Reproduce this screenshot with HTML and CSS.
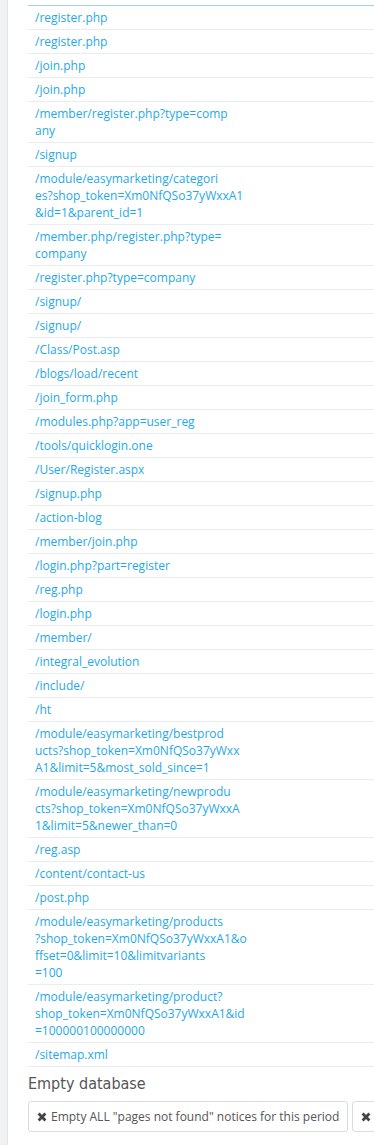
FILE: index.html
```html
<!DOCTYPE html>
<html>
  <head>
    <meta charset="utf-8">
    <title>Pages not found</title>
    <link rel="stylesheet" href="styles.css">
  </head>
  <body>
    <div class="page">
      <div class="side"></div>
      <div class="content">
        <table class="table">
          <tbody>
            <tr><td class="url">/register.php</td><td></td></tr>
            <tr><td class="url">/register.php</td><td></td></tr>
            <tr><td class="url">/join.php</td><td></td></tr>
            <tr><td class="url">/join.php</td><td></td></tr>
            <tr><td class="url">/member/register.php?type=comp<br>any</td><td></td></tr>
            <tr><td class="url">/signup</td><td></td></tr>
            <tr><td class="url">/module/easymarketing/categori<br>es?shop_token=Xm0NfQSo37yWxxA1<br>&amp;id=1&amp;parent_id=1</td><td></td></tr>
            <tr><td class="url">/member.php/register.php?type=<br>company</td><td></td></tr>
            <tr><td class="url">/register.php?type=company</td><td></td></tr>
            <tr><td class="url">/signup/</td><td></td></tr>
            <tr><td class="url">/signup/</td><td></td></tr>
            <tr><td class="url">/Class/Post.asp</td><td></td></tr>
            <tr><td class="url">/blogs/load/recent</td><td></td></tr>
            <tr><td class="url">/join_form.php</td><td></td></tr>
            <tr><td class="url">/modules.php?app=user_reg</td><td></td></tr>
            <tr><td class="url">/tools/quicklogin.one</td><td></td></tr>
            <tr><td class="url">/User/Register.aspx</td><td></td></tr>
            <tr><td class="url">/signup.php</td><td></td></tr>
            <tr><td class="url">/action-blog</td><td></td></tr>
            <tr><td class="url">/member/join.php</td><td></td></tr>
            <tr><td class="url">/login.php?part=register</td><td></td></tr>
            <tr><td class="url">/reg.php</td><td></td></tr>
            <tr><td class="url">/login.php</td><td></td></tr>
            <tr><td class="url">/member/</td><td></td></tr>
            <tr><td class="url">/integral_evolution</td><td></td></tr>
            <tr><td class="url">/include/</td><td></td></tr>
            <tr><td class="url">/ht</td><td></td></tr>
            <tr><td class="url">/module/easymarketing/bestprod<br>ucts?shop_token=Xm0NfQSo37yWxx<br>A1&amp;limit=5&amp;most_sold_since=1</td><td></td></tr>
            <tr><td class="url">/module/easymarketing/newprodu<br>cts?shop_token=Xm0NfQSo37yWxxA<br>1&amp;limit=5&amp;newer_than=0</td><td></td></tr>
            <tr><td class="url">/reg.asp</td><td></td></tr>
            <tr><td class="url">/content/contact-us</td><td></td></tr>
            <tr><td class="url">/post.php</td><td></td></tr>
            <tr><td class="url">/module/easymarketing/products<br>?shop_token=Xm0NfQSo37yWxxA1&amp;o<br>ffset=0&amp;limit=10&amp;limitvariants<br>=100</td><td></td></tr>
            <tr><td class="url">/module/easymarketing/product?<br>shop_token=Xm0NfQSo37yWxxA1&amp;id<br>=100000100000000</td><td></td></tr>
            <tr><td class="url">/sitemap.xml</td><td></td></tr>
          </tbody>
        </table>

        <h4 class="title">Empty database</h4>
        <div class="actions">
          <a href="javascript:;" class="btn">
            <svg class="ico" viewBox="0 0 10 10"><path d="M0.6 2.6 2.6 0.6 5 3 7.4 0.6 9.4 2.6 7 5 9.4 7.4 7.4 9.4 5 7 2.6 9.4 0.6 7.4 3 5z"/></svg>
            Empty ALL "pages not found" notices for this period
          </a>
          <a href="javascript:;" class="btn">
            <svg class="ico" viewBox="0 0 10 10"><path d="M0.6 2.6 2.6 0.6 5 3 7.4 0.6 9.4 2.6 7 5 9.4 7.4 7.4 9.4 5 7 2.6 9.4 0.6 7.4 3 5z"/></svg>
            Empty ALL "pages not found" notices
          </a>
        </div>
      </div>
    </div>
  </body>
</html>
```

FILE: styles.css
```css
*{ margin:0; padding:0; box-sizing: border-box; }
html,body{ overflow-x: hidden; }
body{ width: 374px; height: 1145px; background: #fff;
  font-family: "Open Sans", "Liberation Sans", sans-serif; font-size: 12px; color: #555; }
a{ text-decoration: none; }

.page{ display: flex; min-height: 1145px; }
.side{ flex: 0 0 8px; background: #eff1f2; border-right: 1px solid #e3e6e8; }
.content{ flex: 0 0 auto; padding: 5px 0 0 20px; }

.table{ width: 600px; border-collapse: collapse; table-layout: fixed;
  border-top: 1px solid #a0d0eb; }
.table td{ padding: 3px 7px; line-height: 17px; border-bottom: 1px solid #eaedef;
  vertical-align: top; }
.table td.url{ width: 224px; color: #1fa9ea; white-space: nowrap; }

.title{ margin: 7px 0 7px; font-family: "Liberation Sans Narrow", "DejaVu Sans Condensed", sans-serif;
  font-stretch: condensed; font-weight: normal; font-size: 16px; line-height: 20px; color: #555; }

.actions{ display: flex; gap: 4px; white-space: nowrap; }
.btn{ display: flex; align-items: center; gap: 4px; padding: 6px 8px; height: 31px;
  border: 1px solid #dcdcdc; border-radius: 3px; background: #fff; color: #555;
  font-size: 12px; }
.ico{ width: 10px; height: 10px; fill: #444; }
```
